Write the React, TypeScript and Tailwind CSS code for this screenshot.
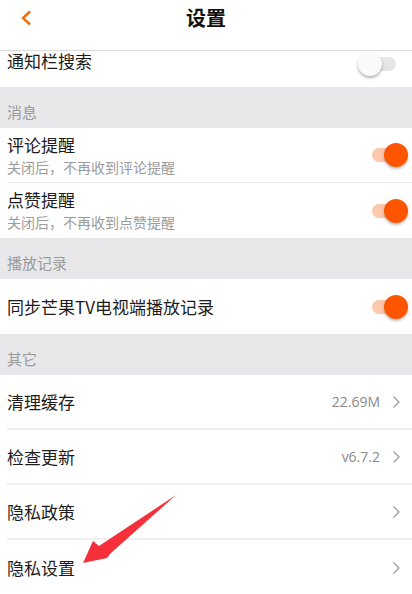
import React from 'react';

const font = { fontFamily: '"Noto Sans CJK SC", "Noto Sans", sans-serif' };

function Toggle({ on }: { on: boolean }) {
  return (
    <div className="relative w-[40px] h-[24px] shrink-0">
      <div
        className={
          on
            ? 'absolute left-[4px] right-[2px] top-[5px] h-[14px] rounded-full bg-[#fcc8ac]'
            : 'absolute left-[4px] right-[2px] top-[5px] h-[14px] rounded-full bg-[#e6e6e6]'
        }
      />
      <div
        className={
          on
            ? 'absolute right-0 top-0 w-[24px] h-[24px] rounded-full bg-[#ff5500] shadow-[0_2px_3px_rgba(0,0,0,0.25)]'
            : 'absolute left-0 top-0 w-[24px] h-[24px] rounded-full bg-[#fafafa] shadow-[0_2px_3px_rgba(0,0,0,0.3)]'
        }
      />
    </div>
  );
}

function Chevron() {
  return (
    <svg width="9" height="14" viewBox="0 0 9 14" className="shrink-0">
      <path d="M1.5 1.5 L7 7 L1.5 12.5" fill="none" stroke="#999" strokeWidth="1.2" />
    </svg>
  );
}

function Section({ label }: { label: string }) {
  return (
    <div className="h-[41px] bg-[#e8e7ea] pl-[7px] pt-[14px] text-[15px] leading-[22px] text-[#9a9a9a]">
      {label}
    </div>
  );
}

function SwitchRow({ title, sub, on, last }: { title: string; sub?: string; on: boolean; last?: boolean }) {
  return (
    <div className="pl-[7px] bg-white">
      <div
        className={
          'h-[55px] flex items-center justify-between pr-[4px] ' + (last ? '' : 'border-b border-[#ececec]')
        }
      >
        <div className="flex flex-col">
          <span className="text-[17px] leading-[22px] text-[#1c1c1c]">{title}</span>
          {sub && <span className="text-[14px] leading-[20px] text-[#9b9b9b] mt-[1px]">{sub}</span>}
        </div>
        <Toggle on={on} />
      </div>
    </div>
  );
}

function LinkRow({ title, value, last }: { title: string; value?: string; last?: boolean }) {
  return (
    <div className="pl-[7px] bg-white">
      <div
        className={
          'h-[55px] flex items-center justify-between pr-[11px] ' + (last ? '' : 'border-b-2 border-[#efefef]')
        }
      >
        <span className="text-[17px] leading-[22px] text-[#1c1c1c]">{title}</span>
        <div className="flex items-center gap-[12px]">
          {value && <span className="text-[14px] text-[#8a8a8a]" style={{ fontFamily: '"Open Sans", sans-serif' }}>{value}</span>}
          <Chevron />
        </div>
      </div>
    </div>
  );
}

export default function App() {
  return (
    <div className="relative w-[412px] h-[594px] overflow-hidden bg-white" style={font}>
      {/* Header */}
      <div className="relative h-[51px] border-b border-[#dcdcdc] bg-white">
        <div className="absolute left-[20px] top-[10px]">
          <svg width="13" height="16" viewBox="0 0 13 16">
            <path d="M10 1.5 L3 8 L10 14.5" fill="none" stroke="#f26a0a" strokeWidth="2.4" />
          </svg>
        </div>
        <div className="text-center pt-[4px] text-[20px] leading-[28px] font-bold text-[#111]">设置</div>
      </div>

      {/* Scrolled row */}
      <div className="h-[36px] pl-[7px] pr-[14px] flex items-start justify-between bg-white">
        <span className="text-[17px] leading-[20px] text-[#1c1c1c]">通知栏搜索</span>
        <div className="mt-[1px]">
          <Toggle on={false} />
        </div>
      </div>

      <Section label="消息" />
      <SwitchRow title="评论提醒" sub="关闭后，不再收到评论提醒" on />
      <SwitchRow title="点赞提醒" sub="关闭后，不再收到点赞提醒" on last />

      <Section label="播放记录" />
      <SwitchRow title="同步芒果TV电视端播放记录" on last />

      <Section label="其它" />
      <LinkRow title="清理缓存" value="22.69M" />
      <LinkRow title="检查更新" value="v6.7.2" />
      <LinkRow title="隐私政策" />
      <LinkRow title="隐私设置" last />

      {/* Annotation arrow */}
      <svg className="absolute left-0 top-0 pointer-events-none" width="412" height="594" viewBox="0 0 412 594">
        <path d="M176 495 L111 553 L107 558 L83 563 L93 541 L99 546 Z" fill="#f5303a" />
      </svg>
    </div>
  );
}
